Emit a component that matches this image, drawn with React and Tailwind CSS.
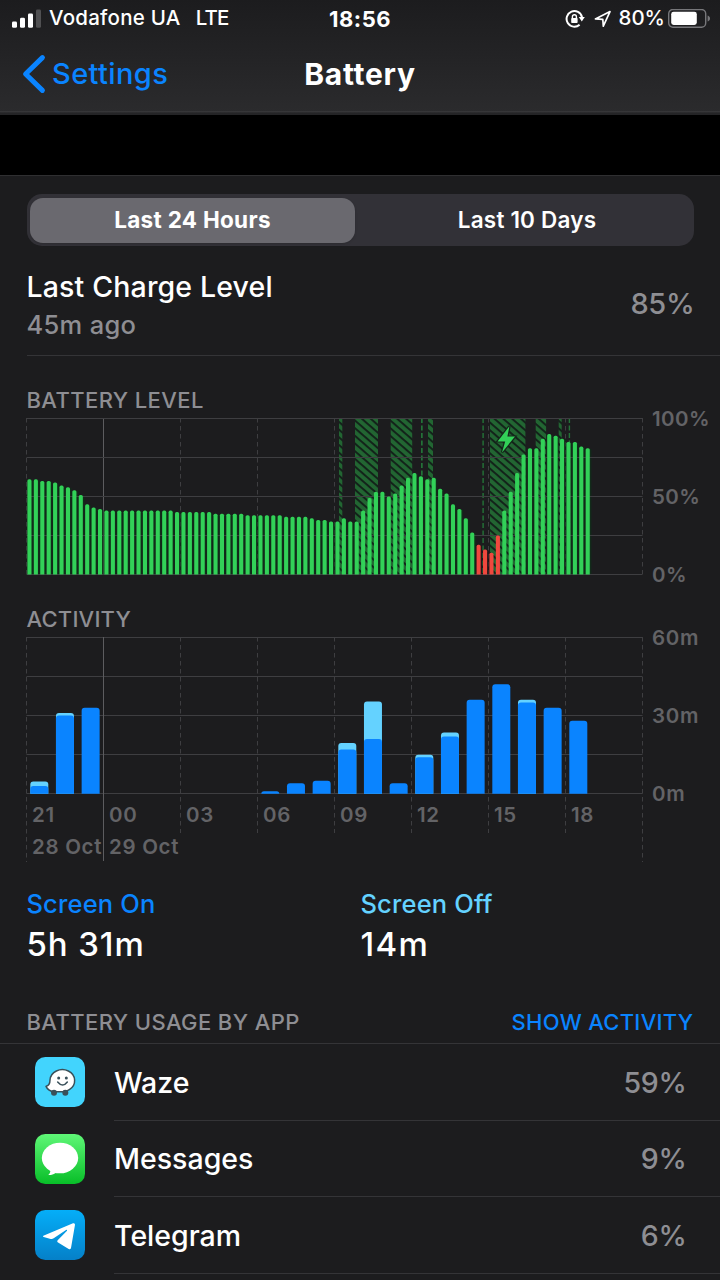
const LEVELS = [
  61, 61, 60, 60, 59, 57, 56, 54, 51, 45, 43, 42, 41, 41, 41, 41, 41, 41, 41, 41, 41, 41, 41,
  40, 40, 40, 40, 40, 40, 39, 39, 39, 39, 39, 38, 38, 38, 38, 38, 38, 37, 37, 37, 37, 36, 35,
  35, 34, 34, 36, 34, 34, 41, 49, 53, 53, 50, 52, 57, 62, 65, 63, 61, 62, 55, 52, 45, 42, 36,
  27, 19, 16, 14, 25, 41, 53, 65, 77, 81, 81, 87, 90, 89, 87, 85, 85, 82, 81,
];
const LOW_BARS = [70, 71, 72, 73];

// [start x, width] of every charging period
const CHARGING = [
  [339, 3.3], [355, 23], [390.7, 21.5], [421, 1.7], [428, 5],
  [482.4, 1.4], [490, 35.4], [535.7, 10.4], [558.7, 3], [568.7, 1.4],
];

// [hour slot, total minutes, screen on minutes]
const ACTIVITY = [
  [0, 4.7, 3], [1, 31, 30], [2, 33, 33], [9, 1, 1], [10, 4, 4], [11, 5, 5],
  [12, 19.5, 17], [13, 35.4, 21], [14, 4, 4], [15, 15, 14], [16, 23.5, 22],
  [17, 36, 36], [18, 42, 42], [19, 36, 35], [20, 33, 33], [21, 28, 28],
];

const HOURS = ["21", "00", "03", "06", "09", "12", "15", "18"];
const LEFT = 26.5;
const RIGHT = 642.5;
const HOUR = 25.667;

const barPath = (x, w, h, base, r) => {
  const rad = Math.min(r, h);
  const top = base - h;
  return `M${x} ${base}V${top + rad}q0 ${-rad} ${rad} ${-rad}h${w - 2 * rad}q${rad} 0 ${rad} ${rad}V${base}Z`;
};

const GridLines = ({ height }) => (
  <g stroke="#3e3e41" strokeWidth="1">
    {[0, 1, 2, 3, 4].map((i) => (
      <line key={i} x1={LEFT} x2={RIGHT} y1={0.5 + (i * height) / 4} y2={0.5 + (i * height) / 4} />
    ))}
  </g>
);

const StatusBar = () => (
  <div className="grid h-[37px] grid-cols-3 items-center px-[10px] text-[20.5px] font-medium text-white">
    <div className="flex items-center pl-[2px]">
      <svg width="30" height="20" viewBox="0 0 30 20">
        <rect x="0" y="12.5" width="5" height="6.3" rx="1.4" fill="#fff" />
        <rect x="8" y="8.8" width="5" height="10" rx="1.4" fill="#fff" />
        <rect x="16" y="4.5" width="5" height="14.3" rx="1.4" fill="#fff" />
        <rect x="24" y="0.6" width="5" height="18.2" rx="1.4" fill="#505052" />
      </svg>
      <span className="ml-[7px] whitespace-nowrap tracking-[0.25px]">Vodafone UA</span>
      <span className="ml-[15px] tracking-[-0.8px]">LTE</span>
    </div>
    <span className="text-center text-[22px] font-bold tracking-[0.5px]">18:56</span>
    <div className="flex items-center justify-end">
      <svg width="21" height="20" viewBox="0 0 21 20" fill="none">
        <path d="M14.6 15.7A7.8 7.8 0 1 1 17 8.2" stroke="#fff" strokeWidth="2" />
        <path d="M13.8 8h6l-3 4.6Z" fill="#fff" />
        <rect x="6.2" y="9" width="6.4" height="5" rx="0.8" fill="#fff" />
        <path d="M7.4 9.2V7.8a2 2 0 0 1 4 0v1.4" stroke="#fff" strokeWidth="1.4" />
      </svg>
      <svg className="ml-2" width="18" height="18" viewBox="0 0 18 18" fill="none">
        <path d="M1.4 8.9 16 1.6 9.3 16.2 8.8 9.3Z" stroke="#fff" strokeWidth="1.7" strokeLinejoin="round" />
      </svg>
      <span className="ml-[6px]">80%</span>
      <svg className="ml-[3px] mr-[-1px] shrink-0" width="43" height="20" viewBox="0 0 43 20">
        <rect x="0.7" y="0.5" width="37" height="17.8" rx="4.2" fill="none" stroke="#77777a" strokeWidth="1.4" />
        <rect x="3.2" y="2.8" width="25.6" height="13.2" rx="2.4" fill="#fff" />
        <path d="M39.6 6.5c3.2 1 3.2 5 0 6Z" fill="#77777a" />
      </svg>
    </div>
  </div>
);

const NavBar = () => (
  <div className="grid h-[73px] grid-cols-3 items-center px-[22px]">
    <div className="flex items-center text-[#0a84ff]">
      <svg width="24" height="40" viewBox="0 0 24 40" fill="none">
        <path d="M20.4 3.6 3.6 20l16.8 16.4" stroke="currentColor" strokeWidth="5" strokeLinecap="round" strokeLinejoin="round" />
      </svg>
      <span className="ml-[6px] text-[29px] font-medium tracking-[0.4px]">Settings</span>
    </div>
    <h1 className="text-center text-[30px] font-bold tracking-[0.7px] text-white">Battery</h1>
  </div>
);

const LevelChart = () => (
  <svg className="block overflow-visible" width="720" height="157" viewBox="0 0 720 157">
    <defs>
      <pattern id="hatch" width="5.8" height="5.8" patternUnits="userSpaceOnUse" patternTransform="rotate(41)">
        <rect width="5.8" height="5.8" fill="#226632" />
        <rect width="5.8" height="2" fill="#13231a" />
      </pattern>
    </defs>
    <g stroke="#3e3e41" strokeDasharray="4.5 3.5">
      {[0, 2, 3, 4, 5, 6, 7, 8].map((i) => (
        <line key={i} x1={LEFT + i * 77} x2={LEFT + i * 77} y1="0" y2="156" />
      ))}
    </g>
    <line x1="103.5" x2="103.5" y1="0" y2="156" stroke="#5c5c5f" />
    {LEVELS.map((v, i) => (
      <rect key={i} x={LEFT + i * 6.417 + 0.2} y={156.4 - v * 1.56 + 1} width="6.4" height={v * 1.56 - 1} fill={LOW_BARS.includes(i) ? "#2a1316" : "#0c3518"} fillOpacity="0.6" />
    ))}
    {CHARGING.map(([x, w]) =>
      w < 2 ? (
        <line key={x} x1={x + w / 2} x2={x + w / 2} y1="0" y2="156" stroke="#237338" strokeWidth={w} strokeDasharray="5 2.5" />
      ) : (
        <rect key={x} x={x} y="0" width={w} height="156" fill="url(#hatch)" />
      )
    )}
    <GridLines height={156} />
    {LEVELS.map((v, i) => (
      <path key={i} d={barPath(LEFT + 0.9 + i * 6.417, 4.1, v * 1.56, 156.5, 1.6)} fill={LOW_BARS.includes(i) ? "#f0483e" : "#32d158"} />
    ))}
    <path d="M509.4 8.2 497.6 23.4h7.6L502 34.4 515 18.6h-7.6Z" fill="#32d158" stroke="#15281b" strokeWidth="2.4" paintOrder="stroke" />
    <g fill="#636366" className="text-[20.5px] font-semibold tracking-[0.4px]">
      <text x="652" y="7.5">100%</text>
      <text x="652" y="85.5">50%</text>
      <text x="652" y="163.5">0%</text>
    </g>
  </svg>
);

const ActivityChart = () => (
  <svg className="block overflow-visible" width="720" height="225" viewBox="0 0 720 225">
    <g stroke="#3e3e41" strokeDasharray="4.5 3.5">
      {[0, 2, 3, 4, 5, 6, 7, 8].map((i) => (
        <line key={i} x1={LEFT + i * 77} x2={LEFT + i * 77} y1="0" y2={i % 8 === 0 ? 225 : 196} />
      ))}
    </g>
    <GridLines height={156} />
    <line x1="103.5" x2="103.5" y1="0" y2="224" stroke="#5c5c5f" />
    {ACTIVITY.map(([slot, total, on]) => (
      <g key={slot}>
        {total > on && <path d={barPath(30.3 + slot * HOUR, 18, total * 2.61, 156.8, 3)} fill="#64d2ff" />}
        <path d={barPath(30.3 + slot * HOUR, 18, on * 2.61, 156.8, 3)} fill="#0a84ff" />
      </g>
    ))}
    <g fill="#636366" className="text-[20.5px] font-semibold tracking-[0.7px]">
      <text x="652" y="7.5">60m</text>
      <text x="652" y="85.5">30m</text>
      <text x="652" y="163.5">0m</text>
      {HOURS.map((h, i) => (
        <text key={h} x={32 + i * 77} y="185">{h}</text>
      ))}
      <text x="32" y="217">28 Oct</text>
      <text x="109" y="217">29 Oct</text>
    </g>
  </svg>
);

const WazeIcon = () => (
  <svg width="50" height="50" viewBox="0 0 150 150">
    <rect width="150" height="150" rx="31" fill="#42d4fd" />
    <path d="M33 88c9-2 12-8 12-19a37 33 0 1 1 58 29q-8 6-20 6H55Q39 101 33 88Z" fill="#fff" stroke="#39505a" strokeWidth="4.5" strokeLinejoin="round" />
    <circle cx="57" cy="107" r="9" fill="#39505a" />
    <circle cx="91" cy="107" r="9" fill="#39505a" />
    <circle cx="71" cy="63" r="4.5" fill="#39505a" />
    <circle cx="94" cy="63" r="4.5" fill="#39505a" />
    <path d="M68 75q15 18 29 0" fill="none" stroke="#39505a" strokeWidth="4.5" strokeLinecap="round" />
  </svg>
);

const MessagesIcon = () => (
  <svg width="50" height="50" viewBox="0 0 150 150">
    <defs>
      <linearGradient id="messages" x1="0" y1="0" x2="0" y2="1">
        <stop offset="0" stopColor="#5ff777" />
        <stop offset="1" stopColor="#08be28" />
      </linearGradient>
    </defs>
    <rect width="150" height="150" rx="31" fill="url(#messages)" />
    <ellipse cx="75" cy="72" rx="54.5" ry="46" fill="#fff" />
    <path d="M42 104q9 7 -2 19q16 0 27-10Z" fill="#fff" />
  </svg>
);

const TelegramIcon = () => (
  <svg width="50" height="50" viewBox="0 0 150 150">
    <defs>
      <linearGradient id="telegram" x1="0" y1="0" x2="0" y2="1">
        <stop offset="0" stopColor="#05aef8" />
        <stop offset="1" stopColor="#0580c8" />
      </linearGradient>
    </defs>
    <rect width="150" height="150" rx="31" fill="url(#telegram)" />
    <path d="M25 77 114 40q6-2 6 4l-12 70q-2 6-7 3L68 97q-3-3 0-6L96 62q1-4-3-2L56 85q-4 3-9 2L26 81q-4-2-1-4Z" fill="#fff" />
  </svg>
);

const APPS = [
  { name: "Waze", usage: "59%", Icon: WazeIcon },
  { name: "Messages", usage: "9%", Icon: MessagesIcon },
  { name: "Telegram", usage: "6%", Icon: TelegramIcon },
];

const AppRow = ({ name, usage, Icon }) => (
  <li className="flex h-[76.5px] items-stretch pl-[35px]">
    <div className="flex w-[79px] shrink-0 items-center">
      <Icon />
    </div>
    <div className="flex grow items-center justify-between border-b border-[#343437] pr-[34px] pt-[2px] text-[28.5px] font-medium">
      <span className="text-white">{name}</span>
      <span className="mr-[-0.5px] tracking-[-0.3px] text-[#8e8e93]">{usage}</span>
    </div>
  </li>
);

const App = () => {
  return (
    <div
      className="flex h-[1280px] w-[720px] flex-col overflow-hidden bg-[#1c1c1e] leading-none"
      style={{ fontFamily: 'Inter, "Liberation Sans", sans-serif' }}
    >
      <header className="h-[115px] shrink-0 border-b-2 border-[#242426] bg-linear-to-b from-[#1c1c1e] to-[#2b2b2d]">
        <StatusBar />
        <NavBar />
        <div className="mt-px h-px bg-[#363638]" />
      </header>
      <div className="h-[60px] shrink-0 bg-black" />

      <main className="flex grow flex-col border-t border-[#2f2f31]">
        <div className="mx-[26.5px] mt-[18px] flex h-[52px] shrink-0 rounded-[15px] bg-[#323137] p-[3.5px] text-[22.5px] font-semibold text-white">
          <button className="w-[325px] rounded-[13px] bg-[#6a696f] font-bold tracking-[0.3px] shadow-sm">Last 24 Hours</button>
          <button className="grow pl-[9px] tracking-[0.2px]">Last 10 Days</button>
        </div>

        <section className="ml-[26.5px] flex h-[110px] shrink-0 items-center justify-between border-b border-[#343437] pr-[26.5px]">
          <div className="mt-[9px] flex flex-col gap-[11px]">
            <h2 className="text-[28.5px] font-medium tracking-[0.15px] text-white">Last Charge Level</h2>
            <p className="text-[25.5px] font-medium tracking-[0.3px] text-[#8e8e93]">45m ago</p>
          </div>
          <span className="mr-[-1px] mt-[6px] text-[29px] font-medium tracking-[-0.3px] text-[#8e8e93]">85%</span>
        </section>

        <h3 className="ml-[26.5px] flex h-[62px] shrink-0 items-end pb-[7px] text-[22px] font-medium tracking-[0.4px] text-[#8e8e93]">BATTERY LEVEL</h3>
        <LevelChart />
        <h3 className="ml-[26.5px] flex h-[62px] shrink-0 items-end pb-[7px] text-[22px] font-medium tracking-[0.2px] text-[#8e8e93]">ACTIVITY</h3>
        <ActivityChart />

        <section className="ml-[26.5px] mt-[29px] grid shrink-0 grid-cols-[334px_1fr] font-medium">
          <div>
            <p className="text-[25.5px] tracking-[0.15px] text-[#0a84ff]">Screen On</p>
            <p className="mt-[11px] text-[33px] tracking-[0.9px] text-white">5h 31m</p>
          </div>
          <div>
            <p className="text-[25.5px] tracking-[0.15px] text-[#64d2ff]">Screen Off</p>
            <p className="mt-[11px] text-[33px] tracking-[1.3px] text-white">14m</p>
          </div>
        </section>

        <section className="mt-[50.5px] shrink-0">
          <div className="flex h-[33px] items-start justify-between border-b border-[#343437] px-[26.5px] text-[22px] font-medium">
            <h3 className="tracking-[0.4px] text-[#8e8e93]">BATTERY USAGE BY APP</h3>
            <button className="leading-none tracking-[0.3px] text-[#0a84ff]">SHOW ACTIVITY</button>
          </div>
          <ul>
            {APPS.map((app) => (
              <AppRow key={app.name} {...app} />
            ))}
          </ul>
        </section>
      </main>
    </div>
  );
};

export default App;
